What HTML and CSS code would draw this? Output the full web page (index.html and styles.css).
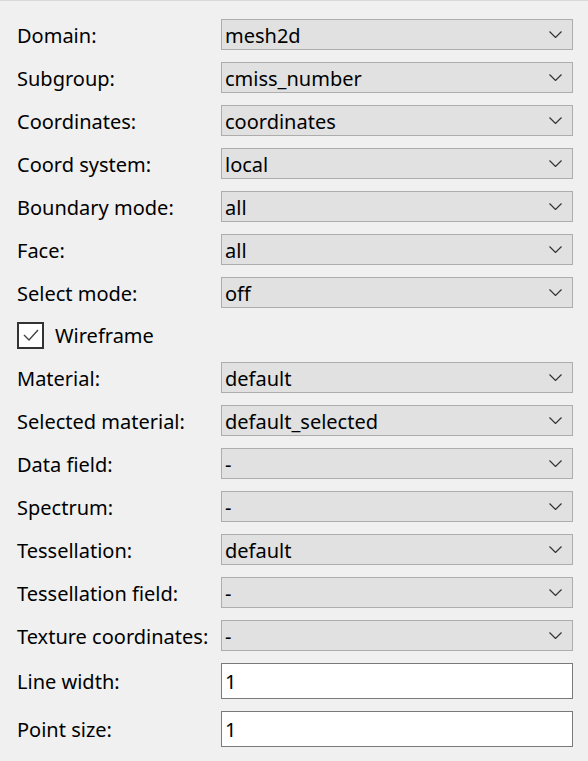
FILE: index.html
```html
<!DOCTYPE html>
<html>
<head>
<meta charset="utf-8">
<link rel="stylesheet" href="styles.css">
</head>
<body>
<div class="form">
  <div class="row"><span class="label">Domain:</span><div class="combo"><span>mesh2d</span><svg class="chev" viewBox="0 0 13 7"><path d="M0.5 0.5 L6.5 6.5 L12.5 0.5"/></svg></div></div>
  <div class="row"><span class="label">Subgroup:</span><div class="combo"><span>cmiss_number</span><svg class="chev" viewBox="0 0 13 7"><path d="M0.5 0.5 L6.5 6.5 L12.5 0.5"/></svg></div></div>
  <div class="row"><span class="label">Coordinates:</span><div class="combo"><span>coordinates</span><svg class="chev" viewBox="0 0 13 7"><path d="M0.5 0.5 L6.5 6.5 L12.5 0.5"/></svg></div></div>
  <div class="row"><span class="label">Coord system:</span><div class="combo"><span>local</span><svg class="chev" viewBox="0 0 13 7"><path d="M0.5 0.5 L6.5 6.5 L12.5 0.5"/></svg></div></div>
  <div class="row"><span class="label">Boundary mode:</span><div class="combo"><span>all</span><svg class="chev" viewBox="0 0 13 7"><path d="M0.5 0.5 L6.5 6.5 L12.5 0.5"/></svg></div></div>
  <div class="row"><span class="label">Face:</span><div class="combo"><span>all</span><svg class="chev" viewBox="0 0 13 7"><path d="M0.5 0.5 L6.5 6.5 L12.5 0.5"/></svg></div></div>
  <div class="row"><span class="label">Select mode:</span><div class="combo"><span>off</span><svg class="chev" viewBox="0 0 13 7"><path d="M0.5 0.5 L6.5 6.5 L12.5 0.5"/></svg></div></div>
  <div class="checkrow"><span class="checkbox"><svg viewBox="0 0 22 22"><path d="M4 11 L9 16 L18 6"/></svg></span><span class="checklabel">Wireframe</span></div>
  <div class="row"><span class="label">Material:</span><div class="combo"><span>default</span><svg class="chev" viewBox="0 0 13 7"><path d="M0.5 0.5 L6.5 6.5 L12.5 0.5"/></svg></div></div>
  <div class="row"><span class="label">Selected material:</span><div class="combo"><span>default_selected</span><svg class="chev" viewBox="0 0 13 7"><path d="M0.5 0.5 L6.5 6.5 L12.5 0.5"/></svg></div></div>
  <div class="row"><span class="label">Data field:</span><div class="combo"><span>-</span><svg class="chev" viewBox="0 0 13 7"><path d="M0.5 0.5 L6.5 6.5 L12.5 0.5"/></svg></div></div>
  <div class="row"><span class="label">Spectrum:</span><div class="combo"><span>-</span><svg class="chev" viewBox="0 0 13 7"><path d="M0.5 0.5 L6.5 6.5 L12.5 0.5"/></svg></div></div>
  <div class="row"><span class="label">Tessellation:</span><div class="combo"><span>default</span><svg class="chev" viewBox="0 0 13 7"><path d="M0.5 0.5 L6.5 6.5 L12.5 0.5"/></svg></div></div>
  <div class="row"><span class="label">Tessellation field:</span><div class="combo"><span>-</span><svg class="chev" viewBox="0 0 13 7"><path d="M0.5 0.5 L6.5 6.5 L12.5 0.5"/></svg></div></div>
  <div class="row"><span class="label">Texture coordinates:</span><div class="combo"><span>-</span><svg class="chev" viewBox="0 0 13 7"><path d="M0.5 0.5 L6.5 6.5 L12.5 0.5"/></svg></div></div>
  <div class="row edit-row"><span class="label">Line width:</span><div class="edit">1</div></div>
  <div class="row edit-row"><span class="label">Point size:</span><div class="edit">1</div></div>
</div>
</body>
</html>
```
FILE: styles.css
```css
html, body {
  margin: 0;
  padding: 0;
  background: #f0f0f0;
}
body {
  width: 588px;
  height: 761px;
  border-top: 1px solid #d9d9d9;
  box-sizing: border-box;
  font-family: "Noto Sans", "Open Sans", sans-serif;
  font-size: 20px;
  color: #000;
  overflow: hidden;
}
.form {
  display: flex;
  flex-direction: column;
  gap: 12px;
  padding: 18px 0 0 17px;
}
.row {
  display: grid;
  grid-template-columns: 204px 352px;
  align-items: center;
  height: 31px;
}
.edit-row {
  height: 36px;
}
.label {
  white-space: nowrap;
  line-height: 1;
  padding-top: 2px;
}
.combo {
  height: 31px;
  box-sizing: border-box;
  background: #e1e1e1;
  border: 1px solid #adadad;
  display: flex;
  align-items: center;
  justify-content: space-between;
  padding: 0 10px 0 3px;
}
.combo span {
  line-height: 1;
  padding-top: 2px;
}
.chev {
  width: 13px;
  height: 7px;
  fill: none;
  stroke: #333;
  stroke-width: 1.2;
}
.edit {
  height: 36px;
  box-sizing: border-box;
  background: #fff;
  border: 1px solid #7a7a7a;
  display: flex;
  align-items: center;
  padding: 2px 3px 0;
  line-height: 1;
}
.checkrow {
  display: flex;
  align-items: center;
  height: 30px;
  gap: 11px;
}
.checkbox {
  width: 27px;
  height: 27px;
  box-sizing: border-box;
  border: 2px solid #333;
  background: #fff;
  display: flex;
  align-items: center;
  justify-content: center;
}
.checkbox svg {
  width: 22px;
  height: 22px;
  fill: none;
  stroke: #444;
  stroke-width: 1.4;
}
.checklabel {
  line-height: 1;
  padding-top: 2px;
}
```
